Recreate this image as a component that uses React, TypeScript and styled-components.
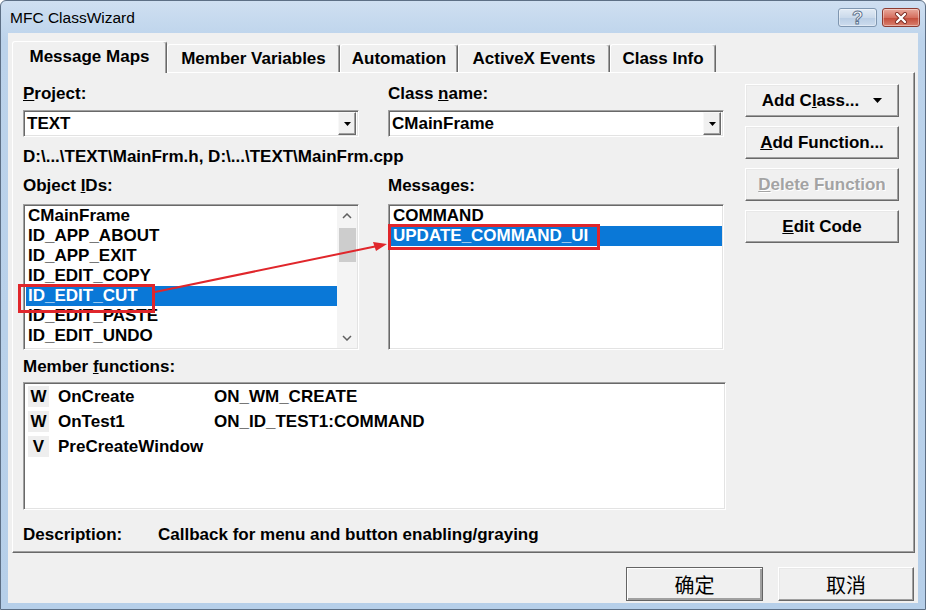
import React from 'react';
import styled, { createGlobalStyle } from 'styled-components';

const GlobalStyle = createGlobalStyle`
  html, body { margin: 0; padding: 0; background: #ffffff; }
  body { font-family: "Liberation Sans", Arial, sans-serif; }
  * { box-sizing: border-box; }
`;

const FONT = `"Liberation Sans", Arial, sans-serif`;
const CJK = `"Liberation Sans", "Noto Sans CJK SC", sans-serif`;

const Window = styled.div`
  position: relative;
  width: 926px;
  height: 610px;
  display: flex;
  flex-direction: column;
  background: linear-gradient(#cfdff1, #bcd3eb 40px, #b6cfe9);
  border: 1px solid #5d6f85;
  border-radius: 6px 6px 0 0;
  overflow: hidden;
`;

const TitleBar = styled.div`
  height: 32px;
  flex: none;
  display: flex;
  align-items: flex-start;
  padding: 0 5px 0 9px;
`;

const Title = styled.div`
  flex: 1;
  line-height: 34px;
  font-family: ${FONT};
  font-size: 15.5px;
  color: #000;
`;

const CaptionButtons = styled.div`
  display: flex;
  gap: 5px;
  margin-top: 7px;
`;

const CaptionButton = styled.div<{ $close?: boolean }>`
  width: ${(p) => (p.$close ? 38 : 39)}px;
  height: 19px;
  border-radius: 3px;
  border: 1px solid ${(p) => (p.$close ? '#8d3b31' : '#7f96b0')};
  background: ${(p) =>
    p.$close
      ? 'linear-gradient(#e9a99c, #d56f5f 50%, #c34a38 51%, #d9806e)'
      : 'linear-gradient(#e2ebf5, #cbdaeb 50%, #b9cde4 51%, #cddcee)'};
  box-shadow: inset 0 0 0 1px rgba(255, 255, 255, 0.4);
  display: flex;
  align-items: center;
  justify-content: center;
`;

const HelpGlyph = styled.span`
  font-family: ${FONT};
  font-weight: bold;
  font-size: 18px;
  line-height: 18px;
  margin-top: 1px;
  color: #ffffff;
  -webkit-text-stroke: 1px #5f7590;
`;

const Frame = styled.div`
  flex: 1;
  display: flex;
  padding: 0 7px 6px 7px;
`;

const Client = styled.div`
  flex: 1;
  display: flex;
  flex-direction: column;
  background: #f0f0f0;
  padding: 8px 3px 2px 4px;
  font-family: ${FONT};
  font-weight: bold;
  font-size: 17px;
  color: #000;
`;

const TabStrip = styled.div`
  display: flex;
  height: 31px;
  align-items: flex-start;
`;

const Tab = styled.div<{ $active?: boolean; $w: number }>`
  position: relative;
  z-index: ${(p) => (p.$active ? 2 : 0)};
  width: ${(p) => p.$w}px;
  height: ${(p) => (p.$active ? 32 : 28)}px;
  margin-top: ${(p) => (p.$active ? 0 : 3)}px;
  background: #f0f0f0;
  border-top: 1px solid #ffffff;
  border-left: 1px solid #ffffff;
  border-right: 1px solid #696969;
  box-shadow: inset -1px 0 #a0a0a0;
  border-radius: 3px 3px 0 0;
  display: flex;
  align-items: center;
  justify-content: center;
  padding-bottom: ${(p) => (p.$active ? 1 : 0)}px;
  white-space: nowrap;
`;

const Panel = styled.div`
  height: 481px;
  display: flex;
  gap: 19px;
  padding: 11px 0 0 10px;
  border: 1px solid;
  border-color: #ffffff #696969 #696969 #ffffff;
  box-shadow: inset -1px -1px #a0a0a0;
`;

const Left = styled.div`
  width: 703px;
  display: flex;
  flex-direction: column;
`;

const FieldsRow = styled.div<{ $top?: number }>`
  display: flex;
  gap: 29px;
  margin-top: ${(p) => p.$top ?? 0}px;
`;

const Field = styled.div`
  width: 336px;
  display: flex;
  flex-direction: column;
`;

const Label = styled.div<{ $gap: number; $top?: number }>`
  height: 20px;
  line-height: 20px;
  margin-top: ${(p) => p.$top ?? 0}px;
  margin-bottom: ${(p) => p.$gap}px;
  white-space: nowrap;
`;

const Sunken = styled.div`
  background: #ffffff;
  border: 1px solid;
  border-color: #a0a0a0 #ffffff #ffffff #a0a0a0;
  box-shadow: inset 1px 1px #696969, inset -1px -1px #e3e3e3;
`;

const Combo = styled(Sunken)`
  height: 27px;
  display: flex;
  align-items: center;
  padding: 2px 2px 2px 3px;
`;

const ComboText = styled.div`
  flex: 1;
  padding-top: 1px;
`;

const DropButton = styled.div`
  width: 18px;
  height: 23px;
  background: #f0f0f0;
  border: 1px solid;
  border-color: #f8f8f8 #696969 #696969 #f8f8f8;
  box-shadow: inset -1px -1px #a0a0a0;
  display: flex;
  align-items: center;
  justify-content: center;
`;

const PathLine = styled.div`
  margin-top: 10px;
  height: 20px;
  line-height: 20px;
  white-space: nowrap;
`;

const ListBox = styled(Sunken)<{ $h: number }>`
  height: ${(p) => p.$h}px;
  display: flex;
  padding: 1px 1px 1px 2px;
  overflow: hidden;
`;

const Items = styled.div`
  flex: 1;
  display: flex;
  flex-direction: column;
`;

const Item = styled.div<{ $selected?: boolean }>`
  height: 20px;
  line-height: 20px;
  padding-left: 2px;
  white-space: nowrap;
  background: ${(p) => (p.$selected ? '#0a78d7' : 'transparent')};
  color: ${(p) => (p.$selected ? '#ffffff' : '#000000')};
`;

const ScrollBar = styled.div`
  width: 20px;
  background: #f4f4f4;
  display: flex;
  flex-direction: column;
  align-items: center;
`;

const ScrollArrow = styled.div`
  width: 20px;
  height: 20px;
  flex: none;
  display: flex;
  align-items: center;
  justify-content: center;
`;

const Thumb = styled.div`
  width: 17px;
  height: 34px;
  margin-top: 2px;
  background: #cdcdcd;
`;

const Spacer = styled.div`
  flex: 1;
`;

const MemberRow = styled.div`
  height: 25px;
  display: flex;
  align-items: center;
  white-space: nowrap;
`;

const KindCell = styled.div`
  width: 21px;
  height: 21px;
  margin-left: 2px;
  background: #eeeeee;
  display: flex;
  align-items: center;
  justify-content: center;
`;

const MemberName = styled.div`
  width: 165px;
  padding-left: 9px;
`;

const Description = styled.div`
  margin-top: 15px;
  height: 20px;
  line-height: 20px;
  display: flex;
  white-space: nowrap;
`;

const DescLabel = styled.div`
  width: 135px;
`;

const Side = styled.div`
  width: 154px;
  display: flex;
  flex-direction: column;
  gap: 9px;
`;

const Button = styled.div<{ $disabled?: boolean; $w?: number; $h?: number; $default?: boolean }>`
  width: ${(p) => p.$w ?? 154}px;
  height: ${(p) => p.$h ?? 33}px;
  background: #f0f0f0;
  border: 1px solid;
  border-color: ${(p) => (p.$default ? '#646464' : '#ffffff #696969 #696969 #ffffff')};
  box-shadow: ${(p) =>
    p.$default
      ? 'inset 1px 1px #ffffff, inset -2px -2px #a0a0a0'
      : 'inset -1px -1px #a0a0a0, inset 1px 1px #e8e8e8'};
  display: flex;
  align-items: center;
  justify-content: center;
  gap: 14px;
  white-space: nowrap;
  color: ${(p) => (p.$disabled ? '#a3a3a3' : '#000000')};
  text-shadow: ${(p) => (p.$disabled ? '1px 1px #ffffff' : 'none')};
`;

const Footer = styled.div`
  margin-top: 14px;
  display: flex;
  justify-content: flex-end;
  gap: 15px;
  padding-right: 1px;
`;

const CjkLabel = styled.span`
  font-family: ${CJK};
  font-weight: normal;
  font-size: 20px;
`;

const Overlay = styled.svg`
  position: absolute;
  left: 0;
  top: 0;
  pointer-events: none;
  z-index: 10;
`;

function Triangle({ w = 7, h = 4 }: { w?: number; h?: number }) {
  return (
    <svg width={w} height={h} viewBox={`0 0 ${w} ${h}`}>
      <polygon points={`0,0 ${w},0 ${w / 2},${h}`} fill="#000" />
    </svg>
  );
}

function Chevron({ up }: { up?: boolean }) {
  return (
    <svg width="10" height="6" viewBox="0 0 10 6">
      <polyline
        points={up ? '1,5 5,1 9,5' : '1,1 5,5 9,1'}
        fill="none"
        stroke="#606060"
        strokeWidth="1.5"
      />
    </svg>
  );
}

const tabs = [
  { label: 'Message Maps', w: 155 },
  { label: 'Member Variables', w: 173 },
  { label: 'Automation', w: 118 },
  { label: 'ActiveX Events', w: 152 },
  { label: 'Class Info', w: 106 },
];

const objectIds = [
  'CMainFrame',
  'ID_APP_ABOUT',
  'ID_APP_EXIT',
  'ID_EDIT_COPY',
  'ID_EDIT_CUT',
  'ID_EDIT_PASTE',
  'ID_EDIT_UNDO',
];

const messages = ['COMMAND', 'UPDATE_COMMAND_UI'];

const members = [
  { kind: 'W', name: 'OnCreate', handler: 'ON_WM_CREATE' },
  { kind: 'W', name: 'OnTest1', handler: 'ON_ID_TEST1:COMMAND' },
  { kind: 'V', name: 'PreCreateWindow', handler: '' },
];

export default function App() {
  return (
    <>
      <GlobalStyle />
      <Window>
        <TitleBar>
          <Title>MFC ClassWizard</Title>
          <CaptionButtons>
            <CaptionButton>
              <HelpGlyph>?</HelpGlyph>
            </CaptionButton>
            <CaptionButton $close>
              <svg width="14" height="12" viewBox="0 0 14 12">
                <path d="M3 2 L11 10 M11 2 L3 10" stroke="#7a2a20" strokeWidth="4" strokeLinecap="round" />
                <path d="M3 2 L11 10 M11 2 L3 10" stroke="#ffffff" strokeWidth="2.4" strokeLinecap="round" />
              </svg>
            </CaptionButton>
          </CaptionButtons>
        </TitleBar>
        <Frame>
          <Client>
            <TabStrip>
              {tabs.map((t, i) => (
                <Tab key={t.label} $w={t.w} $active={i === 0}>
                  {t.label}
                </Tab>
              ))}
            </TabStrip>
            <Panel>
              <Left>
                <FieldsRow>
                  <Field>
                    <Label $gap={6}>
                      <u>P</u>roject:
                    </Label>
                    <Combo>
                      <ComboText>TEXT</ComboText>
                      <DropButton>
                        <Triangle />
                      </DropButton>
                    </Combo>
                  </Field>
                  <Field>
                    <Label $gap={6}>
                      Class <u>n</u>ame:
                    </Label>
                    <Combo>
                      <ComboText>CMainFrame</ComboText>
                      <DropButton>
                        <Triangle />
                      </DropButton>
                    </Combo>
                  </Field>
                </FieldsRow>
                <PathLine>D:\...\TEXT\MainFrm.h, D:\...\TEXT\MainFrm.cpp</PathLine>
                <FieldsRow $top={9}>
                  <Field>
                    <Label $gap={8}>
                      Object <u>I</u>Ds:
                    </Label>
                    <ListBox $h={146}>
                      <Items>
                        {objectIds.map((id) => (
                          <Item key={id} $selected={id === 'ID_EDIT_CUT'}>
                            {id}
                          </Item>
                        ))}
                      </Items>
                      <ScrollBar>
                        <ScrollArrow>
                          <Chevron up />
                        </ScrollArrow>
                        <Thumb />
                        <Spacer />
                        <ScrollArrow>
                          <Chevron />
                        </ScrollArrow>
                      </ScrollBar>
                    </ListBox>
                  </Field>
                  <Field>
                    <Label $gap={8}>
                      Messa<u>g</u>es:
                    </Label>
                    <ListBox $h={146}>
                      <Items>
                        {messages.map((m) => (
                          <Item key={m} $selected={m === 'UPDATE_COMMAND_UI'}>
                            {m}
                          </Item>
                        ))}
                      </Items>
                    </ListBox>
                  </Field>
                </FieldsRow>
                <Label $gap={5} $top={7}>
                  Member <u>f</u>unctions:
                </Label>
                <ListBox $h={128}>
                  <Items>
                    {members.map((m) => (
                      <MemberRow key={m.name}>
                        <KindCell>{m.kind}</KindCell>
                        <MemberName>{m.name}</MemberName>
                        <div>{m.handler}</div>
                      </MemberRow>
                    ))}
                  </Items>
                </ListBox>
                <Description>
                  <DescLabel>Description:</DescLabel>
                  <div>Callback for menu and button enabling/graying</div>
                </Description>
              </Left>
              <Side>
                <Button>
                  <span>
                    Add C<u>l</u>ass...
                  </span>
                  <Triangle w={9} h={5} />
                </Button>
                <Button>
                  <span>
                    <u>A</u>dd Function...
                  </span>
                </Button>
                <Button $disabled>
                  <span>
                    <u>D</u>elete Function
                  </span>
                </Button>
                <Button>
                  <span>
                    <u>E</u>dit Code
                  </span>
                </Button>
              </Side>
            </Panel>
            <Footer>
              <Button $w={137} $h={34} $default>
                <CjkLabel>确定</CjkLabel>
              </Button>
              <Button $w={136} $h={34}>
                <CjkLabel>取消</CjkLabel>
              </Button>
            </Footer>
          </Client>
        </Frame>
        <Overlay width="926" height="610" viewBox="0 0 926 610">
          <rect x="18.5" y="284.5" width="134" height="26" fill="none" stroke="#e0262b" strokeWidth="3" />
          <rect x="388.5" y="224.5" width="209" height="23" fill="none" stroke="#e0262b" strokeWidth="3" />
          <line x1="154" y1="291" x2="374" y2="245.5" stroke="#e0262b" strokeWidth="2" />
          <polygon points="386,243 372,241 375,250" fill="#e0262b" />
        </Overlay>
      </Window>
    </>
  );
}
